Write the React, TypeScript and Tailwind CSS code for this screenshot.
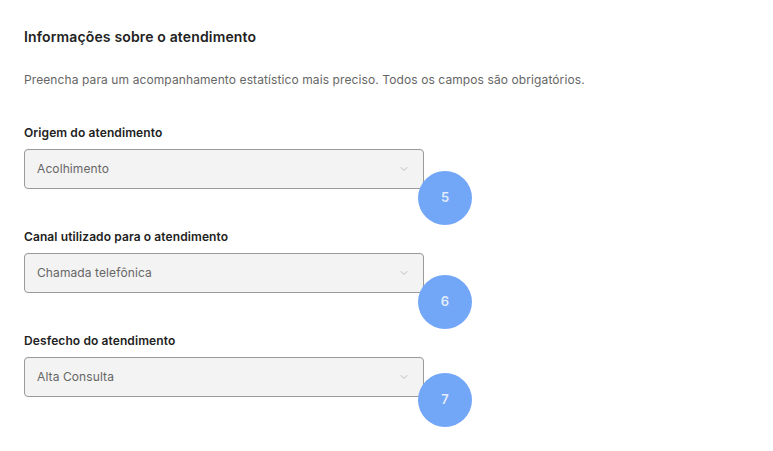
import { ChevronDown } from 'lucide-react';

// marker offsets differ per row in the reference
const FIELDS = [
  { label: 'Origem do atendimento', value: 'Acolhimento', step: 5, pos: 'top-[22px]' },
  { label: 'Canal utilizado para o atendimento', value: 'Chamada telefônica', step: 6, pos: 'top-[22px]' },
  { label: 'Desfecho do atendimento', value: 'Alta Consulta', step: 7, pos: 'top-[16px]' },
];

function SelectField({ label, value, step, pos }: { label: string; value: string; step: number; pos: string }) {
  return (
    <div className="flex flex-col">
      <span className="text-[12px] font-semibold text-[#222] leading-[16px] tracking-[0.1px]">{label}</span>
      <div className="relative mt-[8px] w-[400px]">
        <div className="flex items-center justify-between h-[40px] pl-[12px] pr-[13px] bg-[#f3f3f3] border border-[#9a9a9a] rounded-[4px]">
          <span className="text-[12px] text-[#666] tracking-[0.1px]">{value}</span>
          <ChevronDown size={12} strokeWidth={1.2} className="text-[#999]" />
        </div>
        {/* step marker overlapping the select's corner */}
        <div className={`absolute left-[394px] ${pos} w-[54px] h-[54px] rounded-full bg-[#72a6f7] grid place-items-center text-[13px] font-semibold text-[#e2ecfc]`}>
          {step}
        </div>
      </div>
    </div>
  );
}

export default function App() {
  return (
    <div className="w-[773px] h-[451px] bg-white px-[24px] pt-[28px]" style={{ fontFamily: 'Inter, "Noto Sans", sans-serif' }}>
      <h2 className="text-[14px] font-semibold text-[#222] leading-[18px] tracking-[0.15px]">Informações sobre o atendimento</h2>
      <p className="mt-[26px] text-[12px] text-[#666] leading-[16px] tracking-[0.1px]">
        Preencha para um acompanhamento estatístico mais preciso. Todos os campos são obrigatórios.
      </p>
      <div className="mt-[37px] flex flex-col gap-[40px]">
        {FIELDS.map((f) => (
          <SelectField key={f.step} {...f} />
        ))}
      </div>
    </div>
  );
}
